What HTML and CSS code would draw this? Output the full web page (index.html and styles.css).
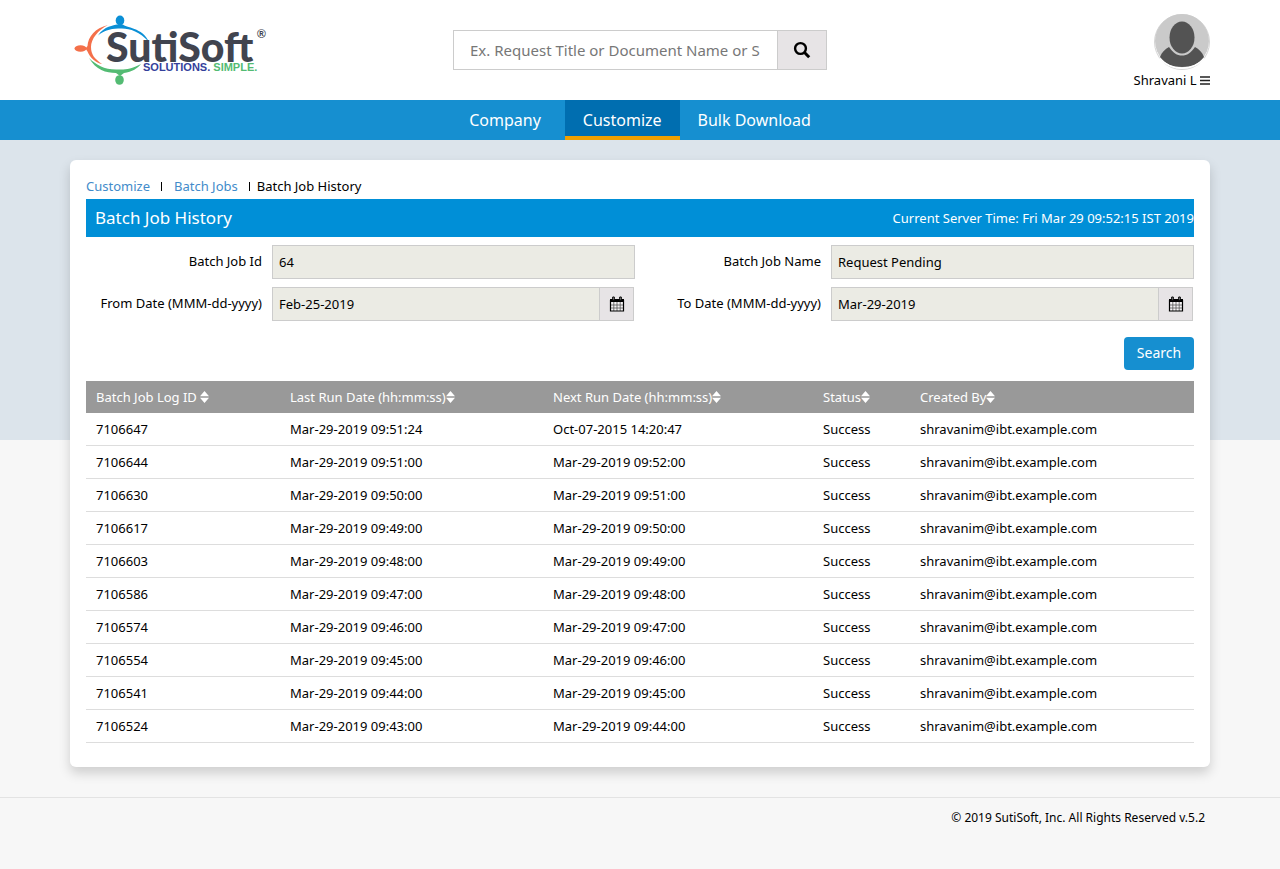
FILE: index.html
```html
<!DOCTYPE html>
<html lang="en">
<head>
<meta charset="utf-8">
<title>Batch Job History</title>
<link rel="stylesheet" href="styles.css">
</head>
<body>
<svg class="defs" width="0" height="0" aria-hidden="true">
  <symbol id="sort" viewBox="0 0 9 14"><path d="M4.500 1 9 6.200H0ZM0 7.800h9L4.500 13Z" fill="currentColor"/></symbol>
  <symbol id="calendar" viewBox="0 0 16 16">
    <path d="M1 3h14v3H1z" fill="#000"/>
    <path d="M1.500 6h13v9h-13z" fill="#f4f2f4"/>
    <path d="M1.500 9h13M1.500 12h13M4.800 6v9M8 6v9M11.200 6v9" fill="none" stroke="#555" stroke-width=".8"/>
    <path d="M1.500 4v11h13V4" fill="none" stroke="#000" stroke-width="1.200"/>
    <path d="M3.700 1h1.600v3.200H3.700zM10.700 1h1.600v3.200h-1.600z" fill="#aaa" stroke="#000" stroke-width="1"/>
  </symbol>
</svg>
<header class="topbar">
  <div class="container topbar-inner">
    <a class="logo" href="#">
      <svg width="200" height="80" viewBox="0 0 200 80" role="img" aria-label="SutiSoft">
        <ellipse cx="50" cy="10.500" rx="4.300" ry="5" fill="#0a8fd6"/>
        <path d="M28 25.500C34 16 44 15.500 47 14.500h6c2 3 20 3 26 17.500-10-11-20-14-29-13.500C41 18 33 21 28 25.500Z" fill="#0a8fd6"/>
        <ellipse cx="10.500" cy="38.500" rx="6" ry="3.300" fill="#f4704a"/>
        <path d="M38 15C25 18 18 27 17.500 36l-2 2.500 2 3C20 48 26 53 32 54 25 49 21 45 21 37 21 29 28 20 38 15Z" fill="#f4704a"/>
        <path d="M19 48C26 60 36 63 46 63l4 3 4-3C62 62 68 58 71 54 61 59 55 60 48 59.500 35 60 26 55 19 48Z" fill="#53bb73"/>
        <ellipse cx="49.500" cy="70" rx="4.300" ry="4.800" fill="#53bb73"/>
        <text class="logo-name" x="36" y="52">SutiSoft</text>
        <text class="logo-mark" x="187" y="28">®</text>
        <text class="logo-tag" x="73" y="61"><tspan fill="#343f9b">SOLUTIONS.</tspan> <tspan fill="#53bb73">SIMPLE.</tspan></text>
      </svg>
    </a>
    <form class="search">
      <input class="search-box" type="text" aria-label="Search requests" placeholder="Ex. Request Title or Document Name or S">
      <button class="search-go" type="button" aria-label="Search">
        <svg width="18" height="18" viewBox="0 0 18 18"><circle cx="7.500" cy="7.500" r="5.400" fill="none" stroke="#000" stroke-width="2.400"/><path d="m11.500 11.500 4.700 4.700" stroke="#000" stroke-width="3"/></svg>
      </button>
    </form>
    <div class="user">
      <svg width="56" height="56" viewBox="0 0 56 56" aria-hidden="true">
        <circle cx="28" cy="28" r="27.500" fill="#fff" stroke="#d4d4d4" stroke-width="1"/>
        <circle cx="28" cy="27" r="27" fill="#cacaca"/>
        <path d="M6 43c2-5 5-8 9-10 4 6 8 8.500 13 8.500s9-2.500 13-8.500c4 2 7 5 9 10-5 7-13 10-22 10S11 50 6 43Z" fill="#535353"/>
        <path d="M6 44.500C12 52 19 54 28 54s16-2 22-9.500" fill="none" stroke="#fff" stroke-width="1.500"/>
        <ellipse cx="28" cy="23.500" rx="12.500" ry="16" fill="#535353"/>
      </svg>
      <button class="user-menu" type="button">Shravani L <svg width="10" height="9" viewBox="0 0 10 9" aria-hidden="true"><path d="M0 1h10M0 4.500h10M0 8h10" stroke="#222" stroke-width="1.600"/></svg></button>
    </div>
  </div>
</header>
<nav class="nav">
  <a class="nav-link nav-first" href="#">Company</a>
  <a class="nav-link nav-active" href="#">Customize</a>
  <a class="nav-link" href="#">Bulk Download</a>
</nav>
<main class="main">
  <section class="container card">
    <div class="crumbs">
      <a href="#">Customize</a><span class="bar bar-wide"></span><a href="#">Batch Jobs</a><span class="bar"></span><span>Batch Job History</span>
    </div>
    <div class="title">
      <h1>Batch Job History</h1>
      <span class="server-time">Current Server Time: Fri Mar 29 09:52:15 IST 2019</span>
    </div>
    <form>
      <div class="fields">
        <div class="field"><label for="jobid">Batch Job Id</label><input id="jobid" type="text" value="64" readonly></div>
        <div class="field"><label for="jobname">Batch Job Name</label><input id="jobname" type="text" value="Request Pending" readonly></div>
        <div class="field"><label for="from">From Date (MMM-dd-yyyy)</label>
          <div class="date"><input id="from" type="text" value="Feb-25-2019" readonly><button type="button" aria-label="Pick from date"><svg width="16" height="16"><use href="#calendar"/></svg></button></div></div>
        <div class="field"><label for="to">To Date (MMM-dd-yyyy)</label>
          <div class="date"><input id="to" type="text" value="Mar-29-2019" readonly><button type="button" aria-label="Pick to date"><svg width="16" height="16"><use href="#calendar"/></svg></button></div></div>
      </div>
      <div class="actions"><button class="submit" type="button">Search</button></div>
    </form>
    <table class="log">
      <colgroup><col class="c-id"><col class="c-last"><col class="c-next"><col class="c-status"><col></colgroup>
      <thead><tr>
        <th><button type="button">Batch Job Log ID <svg width="9" height="14"><use href="#sort"/></svg></button></th>
        <th><button type="button">Last Run Date (hh:mm:ss)<svg width="9" height="14"><use href="#sort"/></svg></button></th>
        <th><button type="button">Next Run Date (hh:mm:ss)<svg width="9" height="14"><use href="#sort"/></svg></button></th>
        <th><button type="button">Status<svg width="9" height="14"><use href="#sort"/></svg></button></th>
        <th><button type="button">Created By<svg width="9" height="14"><use href="#sort"/></svg></button></th>
      </tr></thead>
      <tbody>
        <tr><td>7106647</td><td>Mar-29-2019 09:51:24</td><td>Oct-07-2015 14:20:47</td><td>Success</td><td>shravanim@ibt.example.com</td></tr>
        <tr><td>7106644</td><td>Mar-29-2019 09:51:00</td><td>Mar-29-2019 09:52:00</td><td>Success</td><td>shravanim@ibt.example.com</td></tr>
        <tr><td>7106630</td><td>Mar-29-2019 09:50:00</td><td>Mar-29-2019 09:51:00</td><td>Success</td><td>shravanim@ibt.example.com</td></tr>
        <tr><td>7106617</td><td>Mar-29-2019 09:49:00</td><td>Mar-29-2019 09:50:00</td><td>Success</td><td>shravanim@ibt.example.com</td></tr>
        <tr><td>7106603</td><td>Mar-29-2019 09:48:00</td><td>Mar-29-2019 09:49:00</td><td>Success</td><td>shravanim@ibt.example.com</td></tr>
        <tr><td>7106586</td><td>Mar-29-2019 09:47:00</td><td>Mar-29-2019 09:48:00</td><td>Success</td><td>shravanim@ibt.example.com</td></tr>
        <tr><td>7106574</td><td>Mar-29-2019 09:46:00</td><td>Mar-29-2019 09:47:00</td><td>Success</td><td>shravanim@ibt.example.com</td></tr>
        <tr><td>7106554</td><td>Mar-29-2019 09:45:00</td><td>Mar-29-2019 09:46:00</td><td>Success</td><td>shravanim@ibt.example.com</td></tr>
        <tr><td>7106541</td><td>Mar-29-2019 09:44:00</td><td>Mar-29-2019 09:45:00</td><td>Success</td><td>shravanim@ibt.example.com</td></tr>
        <tr><td>7106524</td><td>Mar-29-2019 09:43:00</td><td>Mar-29-2019 09:44:00</td><td>Success</td><td>shravanim@ibt.example.com</td></tr>
      </tbody>
    </table>
  </section>
</main>
<footer class="footer"><div class="container">© 2019 SutiSoft, Inc. All Rights Reserved v.5.2</div></footer>
</body>
</html>
```
FILE: styles.css
```css
* { box-sizing: border-box; }
body { margin: 0; background: #f7f7f7; color: #000; font: 13px/20px "Noto Sans", "Open Sans", sans-serif; }
button, input { font: inherit; color: inherit; margin: 0; border-radius: 0; }
button { cursor: pointer; }
a { color: #428bca; text-decoration: none; }
.defs { position: absolute; }
.container { max-width: 1140px; margin: 0 auto; }

.topbar { background: #fff; }
.topbar-inner { display: grid; grid-template-columns: 1fr 374px 1fr; height: 100px; }
.logo { padding-top: 10px; }
.logo svg { display: block; }
.logo-name { font: 900 41px "Lato", sans-serif; fill: #41444f; }
.logo-mark { font: 700 12px "Liberation Sans", sans-serif; fill: #41444f; }
.logo-tag { font: 700 11px "Liberation Sans", sans-serif; }
.search { display: flex; align-self: start; height: 40px; margin-top: 30px; }
.search-box { flex: 1; min-width: 0; padding: 0 15px 0 16px; border: 1px solid #ccc; border-right: 0; background: #fff; font-size: 15px; }
.search-box::placeholder { color: #777; opacity: 1; }
.search-go { display: flex; align-items: center; justify-content: center; width: 50px; padding: 0; border: 1px solid #ccc; background: #e7e4e6; }
.user { display: flex; flex-direction: column; align-items: flex-end; padding-top: 14px; }
.user-menu { padding: 0; border: 0; background: none; }

.nav { display: flex; justify-content: center; height: 40px; background: #168fd0; }
.nav-link { padding: 0 18px; border-bottom: 4px solid transparent; color: #fff; font-size: 16px; line-height: 40px; }
.nav-first { margin-right: 6px; }
.nav-active { background: #006eb0; border-color: #f0a000; }

.main { padding: 20px 0 30px; background: linear-gradient(#dce4eb, #dce4eb) top / 100% 300px no-repeat; }
.card { padding: 16px 16px 24px; border-radius: 6px; background: #fff; box-shadow: 0 6px 12px rgba(0, 0, 0, .17); }
.crumbs { display: flex; align-items: center; height: 23px; padding-bottom: 3px; }
.bar { width: 1px; height: 9px; margin: 0 7px 0 11px; background: #000; }
.bar-wide { margin-right: 12px; }
.title { display: flex; align-items: center; justify-content: space-between; height: 38px; padding-left: 9px; background: #008fd7; color: #fff; }
.title h1 { margin: 0; font-size: 17px; font-weight: 400; }

.fields { display: grid; grid-template-columns: 1fr 1fr; gap: 8px 10px; padding-top: 8px; }
.field { display: flex; gap: 10px; }
.field label { width: 176px; padding-top: 6px; text-align: right; white-space: nowrap; }
.field input { flex: 1; min-width: 0; height: 34px; padding: 0 6px; border: 1px solid #ccc; background: #ebebe4; }
.date { display: flex; flex: 1; padding-right: 1px; }
.date input { border-right: 0; }
.date button { display: flex; align-items: center; justify-content: center; width: 35px; padding: 0; border: 1px solid #ccc; background: #e7e4e6; }
.actions { display: flex; justify-content: flex-end; padding: 16px 0 11px; }
.submit { width: 70px; height: 33px; padding: 0 0 2px; border: 0; border-radius: 4px; background: #168fd0; color: #fff; font-size: 14px; }

.log { width: 100%; table-layout: fixed; border-collapse: separate; border-spacing: 0; }
.c-id { width: 194px; }
.c-last { width: 263px; }
.c-next { width: 270px; }
.c-status { width: 97px; }
.log th { height: 32px; padding: 0 10px; background: #999; text-align: left; font-weight: 400; }
.log th button { display: flex; align-items: center; padding: 0; border: 0; background: none; color: #fff; white-space: pre; }
.log td { height: 33px; padding: 0 10px; border-bottom: 1px solid #ddd; }

.footer { border-top: 1px solid #e3e3e3; }
.footer .container { padding: 10px 5px; text-align: right; font-size: 12px; }
```
